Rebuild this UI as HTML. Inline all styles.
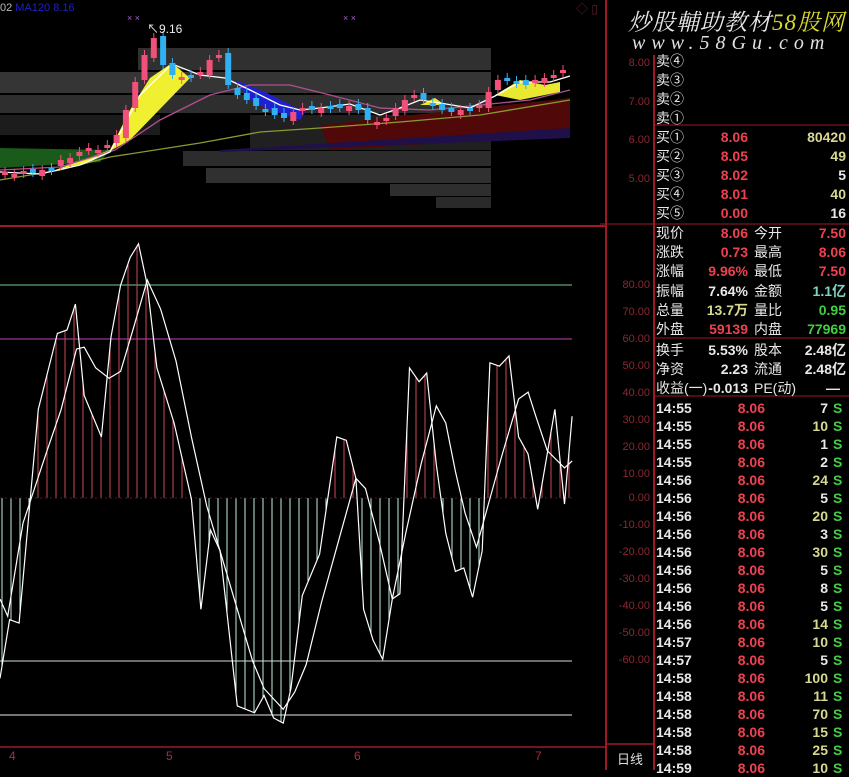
<!DOCTYPE html>
<html><head><meta charset="utf-8">
<style>
*{margin:0;padding:0;box-sizing:border-box}
body{width:849px;height:770px;background:#000;overflow:hidden;position:relative;font-family:"Liberation Sans","Noto Sans CJK SC",sans-serif;color:#ddd}
svg{position:absolute;left:0;top:0}
.t{position:absolute;font-size:14px;line-height:18px;white-space:nowrap;font-weight:bold}
.l{color:#e8e8e8;font-weight:normal}
.r{color:#f04050}.y{color:#d8d890}.g{color:#40d040}.w{color:#e8e8e8}.c{color:#80d0c0}
.ax{position:absolute;font-size:11px;color:#8a2830;right:199px;text-align:right}
</style></head><body>
<svg id="s" width="849" height="770" viewBox="0 0 849 770"></svg>

<div style="position:absolute;left:0;top:2px;font-size:11px;color:#bbb">02 <span style="color:#2020c0">MA120 8.16</span></div>
<div style="position:absolute;left:127px;top:13px;font-size:9px;color:#a060c0">× ×</div>
<div style="position:absolute;left:343px;top:13px;font-size:9px;color:#a060c0">× ×</div>
<div style="position:absolute;left:147px;top:20px;font-size:12px;color:#eee">↖9.16</div>
<div style="position:absolute;left:576px;top:0;font-size:12px;color:#602030">◇ ▯</div>

<div style="position:absolute;left:628px;top:4px;font-size:23px;font-style:italic;color:#e8e8e8;font-family:'Liberation Serif','Noto Serif CJK SC',serif;letter-spacing:1px">炒股輔助教材<span style="color:#d8d830">58股网</span></div>
<div style="position:absolute;left:632px;top:32px;font-size:20px;font-style:italic;color:#e0e0e0;letter-spacing:6px;font-family:'Liberation Serif',serif">www.58Gu.com</div>

<div class="ax" style="top:57px">8.00</div><div class="ax" style="top:96px">7.00</div>
<div class="ax" style="top:134px">6.00</div><div class="ax" style="top:173px">5.00</div>
<div class="ax" style="top:279px">80.00</div><div class="ax" style="top:306px">70.00</div>
<div class="ax" style="top:333px">60.00</div><div class="ax" style="top:360px">50.00</div>
<div class="ax" style="top:387px">40.00</div><div class="ax" style="top:414px">30.00</div>
<div class="ax" style="top:441px">20.00</div><div class="ax" style="top:468px">10.00</div>
<div class="ax" style="top:492px">0.00</div><div class="ax" style="top:519px">-10.00</div>
<div class="ax" style="top:546px">-20.00</div><div class="ax" style="top:573px">-30.00</div>
<div class="ax" style="top:600px">-40.00</div><div class="ax" style="top:627px">-50.00</div>
<div class="ax" style="top:654px">-60.00</div>
<div style="position:absolute;left:617px;top:749px;font-size:13px;color:#ddd">日线</div>
<div style="position:absolute;left:9px;top:749px;font-size:12px;color:#a03040">4</div>
<div style="position:absolute;left:166px;top:749px;font-size:12px;color:#a03040">5</div>
<div style="position:absolute;left:354px;top:749px;font-size:12px;color:#a03040">6</div>
<div style="position:absolute;left:535px;top:749px;font-size:12px;color:#a03040">7</div>

<div id="rp"></div>

<script>
var s=document.getElementById('s'),h='';
function P(a){return a.map(function(p){return p[0]+','+p[1]}).join(' ')}
[[138,48,491,70,'#303030'],[0,72,491,93,'#353535'],[0,95,491,113,'#2e2e2e'],[0,115,160,135,'#1c1c1c'],[250,115,491,150,'#202020'],[183,151,491,166,'#2c2c2c'],[206,168,491,183,'#303030'],[390,184,491,196,'#2e2e2e'],[436,197,491,208,'#2a2a2a']].forEach(function(b){h+='<rect x="'+b[0]+'" y="'+b[1]+'" width="'+(b[2]-b[0])+'" height="'+(b[3]-b[1])+'" fill="'+b[4]+'"/>'});
h+='<polygon points="'+P([[320,125],[570,98],[570,135],[330,150]])+'" fill="#500808"/>';
h+='<polygon points="'+P([[220,150],[570,128],[570,138],[220,152]])+'" fill="#20104a"/>';
h+='<polygon points="'+P([[0,148],[110,150],[100,162],[0,168]])+'" fill="#1a5a1a"/>';
h+='<polygon points="'+P([[55,170],[110,150],[130,110],[150,78],[172,63],[190,78],[130,140],[90,162]])+'" fill="#f0f030"/>';
h+='<polygon points="'+P([[495,95],[520,80],[545,85],[560,82],[560,92],[520,100]])+'" fill="#e8e830"/>';
h+='<polygon points="'+P([[420,105],[435,98],[445,105]])+'" fill="#e8e830"/>';
h+='<polygon points="'+P([[235,80],[265,92],[305,112],[300,120],[270,110],[250,100]])+'" fill="#2020d0"/>';
h+='<polyline points="'+P([[0,180],[60,170],[110,157],[200,143],[260,132],[320,128],[400,122],[480,115],[570,100]])+'" fill="none" stroke="#8a9a30" stroke-width="1.3"/>';
h+='<polyline points="'+P([[0,170],[60,167],[115,150],[160,120],[210,95],[250,85],[290,85],[330,95],[380,108],[430,110],[480,105],[530,100],[570,90]])+'" fill="none" stroke="#b05090" stroke-width="1.3"/>';
h+='<polyline points="'+P([[0,172],[40,174],[80,165],[110,152],[140,95],[172,64],[200,75],[225,78],[250,90],[280,105],[300,110],[320,108],[350,104],[380,115],[400,108],[420,100],[440,103],[470,108],[495,96],[520,82],[550,82],[570,76]])+'" fill="none" stroke="#fff" stroke-width="1.3"/>';
var cy=[172,174,171,173,170,168,160,158,152,148,150,145,135,110,82,55,38,65,75,77,75,72,60,55,85,95,100,106,110,115,118,112,108,110,108,106,108,106,110,120,122,118,108,100,95,100,106,110,112,110,108,105,92,80,78,82,85,80,78,75,70];
var prev=175;
for(var i=0;i<cy.length;i++){var cx=5+i*9.3,c=cy[i],up=c<prev,tp=up?c:prev,bt=up?prev:c;if(bt-tp<3){bt=tp+3}
var col=up?'#f0507a':'#30b0f0';
h+='<line x1="'+cx+'" y1="'+(tp-5)+'" x2="'+cx+'" y2="'+(bt+4)+'" stroke="'+col+'"/>';
h+='<rect x="'+(cx-3)+'" y="'+tp+'" width="6" height="'+(bt-tp)+'" fill="'+col+'"/>';prev=c+(i%3==0?3:-2);}
h+='<line x1="0" y1="226" x2="606" y2="226" stroke="#a01828" stroke-width="2"/>';
h+='<line x1="606" y1="0" x2="606" y2="770" stroke="#a01828" stroke-width="2"/>';
h+='<line x1="654" y1="55" x2="654" y2="770" stroke="#a01828" stroke-width="2"/>';
h+='<line x1="0" y1="747" x2="606" y2="747" stroke="#a01828" stroke-width="1.5"/>';
h+='<line x1="606" y1="744" x2="654" y2="744" stroke="#a01828" stroke-width="1.5"/>';
h+='<line x1="654" y1="125" x2="849" y2="125" stroke="#a01828"/>';
h+='<line x1="600" y1="224" x2="849" y2="224" stroke="#a01828"/>';
h+='<line x1="654" y1="338" x2="849" y2="338" stroke="#a01828"/>';
h+='<line x1="654" y1="396" x2="849" y2="396" stroke="#a01828"/>';
h+='<line x1="0" y1="285" x2="572" y2="285" stroke="#70d090"/>';
h+='<line x1="0" y1="339" x2="572" y2="339" stroke="#c040c0"/>';
h+='<line x1="0" y1="661" x2="572" y2="661" stroke="#d0e0d0"/>';
h+='<line x1="0" y1="715" x2="572" y2="715" stroke="#e8e8e8"/>';
function cv(a){return a.map(function(p){return [+(p[0]/2.613).toFixed(1),+(p[1]/2.9+230).toFixed(1)]})}
var L1=cv([[0,1300],[25,1130],[50,1140],[100,520],[150,300],[175,290],[197,215],[220,480],[265,600],[290,310],[315,160],[340,80],[362,40],[385,160],[410,400],[455,560],[500,780],[525,1100],[550,870],[575,930],[620,1380],[665,1400],[690,1350],[715,1415],[740,1430],[760,1330],[790,1060],[835,940],[880,600],[905,610],[930,720],[950,1100],[975,1190],[1000,1245],[1025,1070],[1045,1055],[1070,400],[1095,440],[1115,415],[1140,680],[1165,880],[1190,990],[1212,980],[1235,1065],[1260,930],[1280,385],[1305,395],[1330,365],[1355,600],[1380,650],[1405,810],[1450,520],[1475,795],[1495,540]]);
var L2=cv([[0,1070],[20,1120],[60,850],[120,650],[160,520],[200,345],[220,340],[250,400],[285,430],[315,410],[350,280],[385,145],[420,230],[460,380],[500,600],[540,800],[580,950],[620,1100],[660,1250],[690,1330],[740,1390],[770,1340],[800,1260],[840,1080],[880,920],[930,720],[955,750],[990,900],[1025,1070],[1060,880],[1100,680],[1140,510],[1165,560],[1190,700],[1215,820],[1245,920],[1275,800],[1310,660],[1355,490],[1380,470],[1400,540],[1430,640],[1475,690],[1495,670]]);
function at(L,x){for(var i=1;i<L.length;i++){if(L[i][0]>=x){var a=L[i-1],b=L[i];return a[1]+(b[1]-a[1])*(x-a[0])/(b[0]-a[0]||1)}}return L[L.length-1][1]}
for(var bx=2;bx<=572;bx+=9){var by=at(L1,bx);h+='<line x1="'+bx+'" y1="498" x2="'+bx+'" y2="'+by+'" stroke="'+(by<498?'#d04858':'#c0f0e0')+'"/>'}
h+='<line x1="0" y1="498" x2="572" y2="498" stroke="#402020" stroke-dasharray="2,3"/>';
h+='<polyline points="'+P(L1)+'" fill="none" stroke="#fff" stroke-width="1.2"/>';
h+='<polyline points="'+P(L2)+'" fill="none" stroke="#fff" stroke-width="1.2"/>';
s.innerHTML=h;
var r='';
function T(x,y,txt,cl,al){r+='<div class="t '+cl+'" style="'+(al?'right:'+(849-x)+'px':'left:'+x+'px')+';top:'+y+'px">'+txt+'</div>'}
['卖④','卖③','卖②','卖①'].forEach(function(t,i){T(656,52+i*19,t,'l')});
[['买①','8.06','80420','y'],['买②','8.05','49','y'],['买③','8.02','5','w'],['买④','8.01','40','y'],['买⑤','0.00','16','w']].forEach(function(a,i){var y=128+i*19;T(656,y,a[0],'l');T(748,y,a[1],'r',1);T(846,y,a[2],a[3],1)});
[['现价','8.06','r','今开','7.50','r'],['涨跌','0.73','r','最高','8.06','r'],['涨幅','9.96%','r','最低','7.50','r'],['振幅','7.64%','w','金额','1.1亿','c'],['总量','13.7万','y','量比','0.95','g'],['外盘','59139','r','内盘','77969','g']].forEach(function(a,i){var y=224+i*19.2;T(656,y,a[0],'l');T(748,y,a[1],a[2],1);T(754,y,a[3],'l');T(846,y,a[4],a[5],1)});
[['换手','5.53%','股本','2.48亿'],['净资','2.23','流通','2.48亿']].forEach(function(a,i){var y=341+i*19;T(656,y,a[0],'l');T(748,y,a[1],'w',1);T(754,y,a[2],'l');T(846,y,a[3],'w',1)});
T(656,379,'收益(一)','l');T(748,379,'-0.013','w',1);T(754,379,'PE(动)','l');T(840,379,'—','w',1);
var tr=[['14:55',7],['14:55',10],['14:55',1],['14:55',2],['14:56',24],['14:56',5],['14:56',20],['14:56',3],['14:56',30],['14:56',5],['14:56',8],['14:56',5],['14:56',14],['14:57',10],['14:57',5],['14:58',100],['14:58',11],['14:58',70],['14:58',15],['14:58',25],['14:59',10]];
tr.forEach(function(a,i){var y=399+i*18;T(656,y,a[0],'w');T(765,y,'8.06','r',1);T(828,y,a[1],a[1]>=10?'y':'w',1);T(833,y,'S','g')});
document.getElementById('rp').innerHTML=r;
</script>
</body></html>
